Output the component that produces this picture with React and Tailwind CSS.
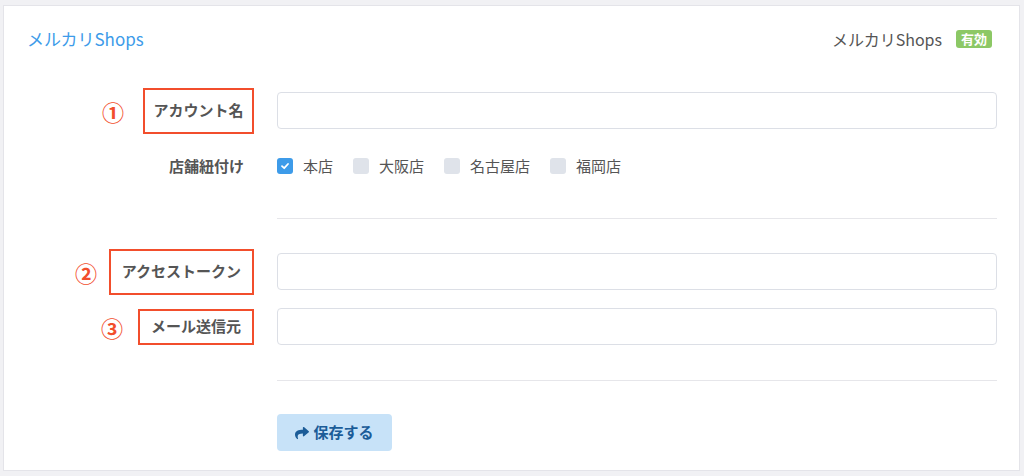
import { FaShare } from 'react-icons/fa';

const font = { fontFamily: '"Noto Sans CJK JP", "Noto Sans", sans-serif' };

const stores = [
  { name: '本店', checked: true },
  { name: '大阪店', checked: false },
  { name: '名古屋店', checked: false },
  { name: '福岡店', checked: false },
];

function Check({ checked }) {
  if (checked) {
    return (
      <span className="w-4 h-4 rounded-[3px] bg-[#3d9be9] flex items-center justify-center">
        <svg width="10" height="10" viewBox="0 0 10 10">
          <path d="M2 5.2 L4.2 7.2 L8 3" stroke="white" strokeWidth="1.8" fill="none" strokeLinecap="round" strokeLinejoin="round" />
        </svg>
      </span>
    );
  }
  return <span className="w-4 h-4 rounded-[3px] bg-[#dfe3ea]" />;
}

function Marked({ num, numGap, w, h, children }) {
  return (
    <div className="w-[250px] flex items-center justify-end">
      <span className="text-[22px] leading-none font-bold text-[#f24e2c]" style={{ marginRight: numGap }}>{num}</span>
      <span
        className="border-2 border-[#f24e2c] flex items-center justify-center text-[15px] font-bold text-[#555]"
        style={{ width: w, height: h }}
      >
        {children}
      </span>
    </div>
  );
}

export default function App() {
  return (
    <div className="h-[476px] bg-[#f1f1f4] pt-[5px] pl-[3px] pr-[4px]" style={font}>
      <div className="bg-white border border-[#e4e4e9] h-[466px]">
        {/* Header */}
        <div className="h-[66px] pl-[23px] pr-[27px] flex items-center justify-between">
          <span className="text-[17px] text-[#3d9be9]">メルカリShops</span>
          <div className="flex items-center gap-[14px]">
            <span className="text-[16px] text-[#555]">メルカリShops</span>
            <span className="bg-[#8cc865] text-white text-[13px] font-bold rounded-[3px] h-[18px] px-[5px] flex items-center">有効</span>
          </div>
        </div>

        {/* Account name */}
        <div className="mt-[20px] h-[37px] flex items-center">
          <Marked num="①" numGap="19px" w="111px" h="46px">アカウント名</Marked>
          <div className="ml-[23px] mr-[22px] flex-1 h-[37px] border border-[#dcdfe6] rounded-[4px]" />
        </div>

        {/* Store link */}
        <div className="mt-[27px] h-[20px] flex items-center">
          <div className="w-[250px] pr-[10px] text-right text-[15px] font-bold text-[#555]">店舗紐付け</div>
          <div className="ml-[23px] flex items-center">
            {stores.map((s) => (
              <label key={s.name} className="flex items-center gap-[10px] mr-[20px] text-[15px] text-[#555]">
                <Check checked={s.checked} />
                <span>{s.name}</span>
              </label>
            ))}
          </div>
        </div>

        <div className="mt-[42px] ml-[273px] mr-[22px] h-px bg-[#e6e6ea]" />

        {/* Access token */}
        <div className="mt-[34px] h-[37px] flex items-center">
          <Marked num="②" numGap="12px" w="145px" h="46px">アクセストークン</Marked>
          <div className="ml-[23px] mr-[22px] flex-1 h-[37px] border border-[#dcdfe6] rounded-[4px]" />
        </div>

        {/* Mail sender */}
        <div className="mt-[18px] h-[37px] flex items-center">
          <Marked num="③" numGap="15px" w="116px" h="36px">メール送信元</Marked>
          <div className="ml-[23px] mr-[22px] flex-1 h-[37px] border border-[#dcdfe6] rounded-[4px]" />
        </div>

        <div className="mt-[35px] ml-[273px] mr-[22px] h-px bg-[#e6e6ea]" />

        {/* Save */}
        <div className="mt-[33px] ml-[273px]">
          <button className="h-[37px] w-[115px] rounded-[4px] bg-[#c7e2f8] text-[#1b5c98] text-[15px] font-bold flex items-center justify-center gap-[4px]">
            <FaShare size={14} />
            保存する
          </button>
        </div>
      </div>
    </div>
  );
}
